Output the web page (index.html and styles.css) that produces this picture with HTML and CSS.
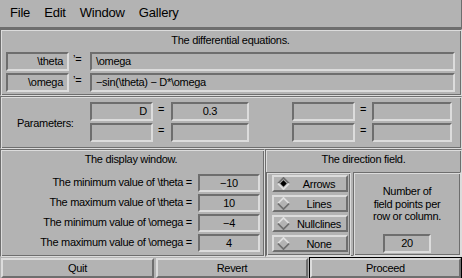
FILE: index.html
```html
<!DOCTYPE html>
<html lang="en">

<head>
    <meta charset="UTF-8">
    <title>Phase plane</title>
    <link rel="stylesheet" href="styles.css">
</head>

<body>
    <div class="menubar">
        <span>File</span>
        <span>Edit</span>
        <span>Window</span>
        <span>Gallery</span>
    </div>

    <div class="panel equations">
        <div class="title">The differential equations.</div>
        <div class="eq-row">
            <div class="field var">\theta</div>
            <div class="prime">’=</div>
            <div class="field expr">\omega</div>
        </div>
        <div class="eq-row">
            <div class="field var">\omega</div>
            <div class="prime">’=</div>
            <div class="field expr">−sin(\theta) − D*\omega</div>
        </div>
    </div>

    <div class="panel params">
        <div class="params-label">Parameters:</div>
        <div class="field var">D</div>
        <div class="eq">=</div>
        <div class="field mid">0.3</div>
        <div></div>
        <div class="field"></div>
        <div class="eq">=</div>
        <div class="field"></div>

        <div class="field"></div>
        <div class="eq">=</div>
        <div class="field"></div>
        <div></div>
        <div class="field"></div>
        <div class="eq">=</div>
        <div class="field"></div>
    </div>

    <div class="lower">
        <div class="panel display">
            <div class="title">The display window.</div>
            <div class="range-list">
                <div class="range-row">
                    <span class="range-label">The minimum value of \theta =</span>
                    <div class="field mid">−10</div>
                </div>
                <div class="range-row">
                    <span class="range-label">The maximum value of \theta =</span>
                    <div class="field mid">10</div>
                </div>
                <div class="range-row">
                    <span class="range-label">The minimum value of \omega =</span>
                    <div class="field mid">−4</div>
                </div>
                <div class="range-row">
                    <span class="range-label">The maximum value of \omega =</span>
                    <div class="field mid">4</div>
                </div>
            </div>
        </div>

        <div class="panel direction">
            <div class="title">The direction field.</div>
            <div class="direction-body">
                <div class="subpanel radios">
                    <div class="radio on">
                        <svg width="13" height="13" viewBox="0 0 12 12">
                            <polygon points="6,0.5 11.5,6 6,11.5 0.5,6" fill="#b3b3b3"/>
                            <polyline points="0.8,6 6,0.8 11.2,6" fill="none" stroke="#6e6e6e" stroke-width="1.6"/>
                            <polyline points="0.8,6 6,11.2 11.2,6" fill="none" stroke="#e0e0e0" stroke-width="1.6"/>
                            <polygon points="6,3 9,6 6,9 3,6" fill="#000"/>
                        </svg>
                        <span>Arrows</span>
                    </div>
                    <div class="radio">
                        <svg width="13" height="13" viewBox="0 0 12 12">
                            <polygon points="6,0.5 11.5,6 6,11.5 0.5,6" fill="#b3b3b3"/>
                            <polyline points="0.8,6 6,0.8 11.2,6" fill="none" stroke="#e0e0e0" stroke-width="1.6"/>
                            <polyline points="0.8,6 6,11.2 11.2,6" fill="none" stroke="#6e6e6e" stroke-width="1.6"/>
                        </svg>
                        <span>Lines</span>
                    </div>
                    <div class="radio">
                        <svg width="13" height="13" viewBox="0 0 12 12">
                            <polygon points="6,0.5 11.5,6 6,11.5 0.5,6" fill="#b3b3b3"/>
                            <polyline points="0.8,6 6,0.8 11.2,6" fill="none" stroke="#e0e0e0" stroke-width="1.6"/>
                            <polyline points="0.8,6 6,11.2 11.2,6" fill="none" stroke="#6e6e6e" stroke-width="1.6"/>
                        </svg>
                        <span>Nullclines</span>
                    </div>
                    <div class="radio">
                        <svg width="13" height="13" viewBox="0 0 12 12">
                            <polygon points="6,0.5 11.5,6 6,11.5 0.5,6" fill="#b3b3b3"/>
                            <polyline points="0.8,6 6,0.8 11.2,6" fill="none" stroke="#e0e0e0" stroke-width="1.6"/>
                            <polyline points="0.8,6 6,11.2 11.2,6" fill="none" stroke="#6e6e6e" stroke-width="1.6"/>
                        </svg>
                        <span>None</span>
                    </div>
                </div>
                <div class="subpanel points">
                    <div class="points-text">Number of<br>field points per<br>row or column.</div>
                    <div class="field mid points-field">20</div>
                </div>
            </div>
        </div>
    </div>

    <div class="buttons">
        <div class="button">Quit</div>
        <div class="button">Revert</div>
        <div class="button default">Proceed</div>
    </div>
</body>

</html>
```

FILE: styles.css
```css
* {
    box-sizing: border-box;
}

body {
    margin: 0;
    width: 462px;
    height: 278px;
    overflow: hidden;
    background-color: #b3b3b3;
    font-family: "Liberation Sans", Arial, sans-serif;
    font-size: 11px;
    letter-spacing: -0.3px;
    color: #000;
}

.menubar {
    height: 29px;
    display: flex;
    align-items: center;
    gap: 14px;
    padding-left: 10px;
    padding-bottom: 2px;
    font-size: 13px;
    letter-spacing: -0.2px;
    border-bottom: 2px solid #6e6e6e;
    border-right: 1px solid #6e6e6e;
}

/* engraved frame */
.panel,
.subpanel {
    border: 1px solid;
    border-color: #6e6e6e #dcdcdc #dcdcdc #6e6e6e;
    box-shadow: inset 1px 1px 0 #dcdcdc, inset -1px -1px 0 #6e6e6e;
}

.title {
    height: 14px;
    line-height: 14px;
    text-align: center;
}

/* sunken input */
.field {
    height: 19px;
    line-height: 15px;
    padding: 0 4px;
    border: 2px solid;
    border-color: #6e6e6e #dcdcdc #dcdcdc #6e6e6e;
    white-space: nowrap;
    overflow: hidden;
}

.field.var {
    text-align: right;
}

.field.mid {
    text-align: center;
}

.equations {
    height: 67px;
    padding: 3px 6px 3px 5px;
}

.equations .title {
    margin-bottom: 5px;
}

.eq-row {
    display: grid;
    grid-template-columns: 63px 21px 1fr;
    margin-bottom: 2px;
}

.prime {
    padding-left: 4px;
    line-height: 14px;
}

.params {
    height: 53px;
    padding: 5px 9px 5px 16px;
    display: grid;
    grid-template-columns: 73px 63px 18px 78px 43px 63px 17px 80px;
    grid-template-rows: 19px 19px;
    row-gap: 2px;
}

.params-label {
    grid-row: span 2;
    align-self: center;
    padding-top: 2px;
}

.eq {
    padding-left: 5px;
    line-height: 15px;
}

.lower {
    display: flex;
    height: 108px;
}

.display {
    width: 265px;
    padding: 2px 4px 0 1px;
}

.range-list {
    margin-top: 8px;
    display: flex;
    flex-direction: column;
    gap: 2px;
}

.range-row {
    display: grid;
    grid-template-columns: 1fr 62px;
    column-gap: 6px;
}

.range-row .field {
    height: 18px;
    line-height: 14px;
}

.range-label {
    text-align: right;
    line-height: 16px;
}

.direction {
    flex: 1;
    padding: 2px 0 0 0;
    display: flex;
    flex-direction: column;
}

.direction-body {
    flex: 1;
    margin-top: 6px;
    display: flex;
    gap: 2px;
}

.radios {
    width: 85px;
    padding: 2px 2px 0 5px;
    display: flex;
    flex-direction: column;
    gap: 3px;
}

.radio {
    height: 17px;
    display: flex;
    align-items: center;
    padding-left: 3px;
    border: 2px solid;
    border-color: #dcdcdc #6e6e6e #6e6e6e #dcdcdc;
}

.radio span {
    flex: 1;
    text-align: center;
    padding-left: 2px;
}

.points {
    flex: 1;
    display: flex;
    flex-direction: column;
    align-items: center;
    padding-top: 12px;
}

.points-text {
    text-align: center;
    line-height: 12.5px;
}

.points-field {
    margin-top: 11px;
    width: 48px;
}

.buttons {
    display: grid;
    grid-template-columns: 153px 152px 1fr;
    column-gap: 2px;
    padding: 1px 1px 0 1px;
}

.button {
    height: 20px;
    line-height: 16px;
    text-align: center;
    border: 2px solid;
    border-color: #dcdcdc #6e6e6e #6e6e6e #dcdcdc;
}

.button.default {
    outline: 1px solid #000;
}
```
